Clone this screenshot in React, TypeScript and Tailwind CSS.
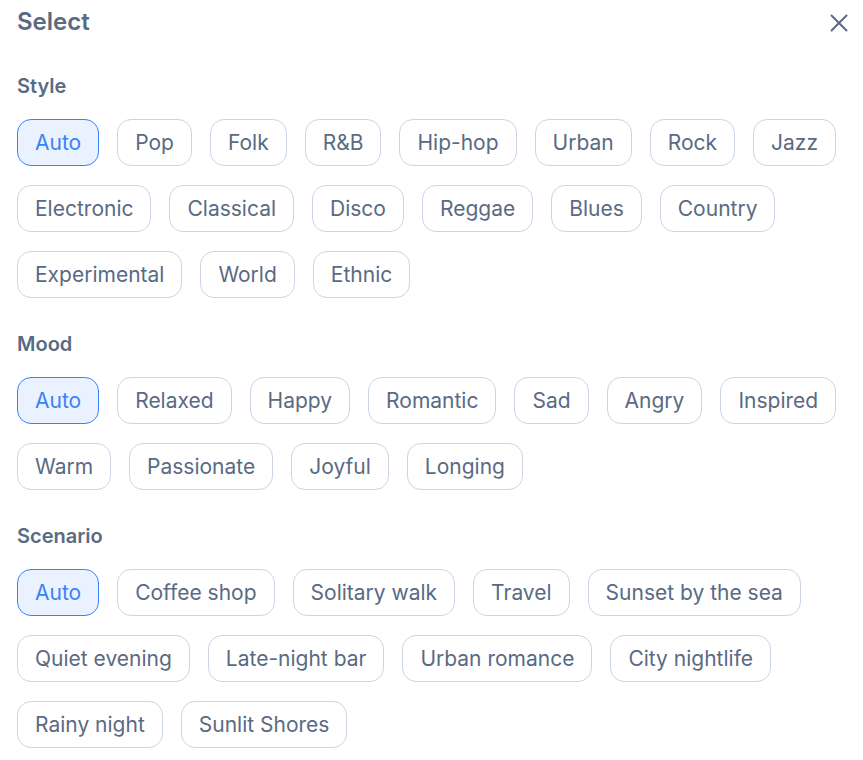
const groups = [
  {
    title: 'Style',
    options: [
      'Auto', 'Pop', 'Folk', 'R&B', 'Hip-hop', 'Urban', 'Rock', 'Jazz',
      'Electronic', 'Classical', 'Disco', 'Reggae', 'Blues', 'Country',
      'Experimental', 'World', 'Ethnic',
    ],
  },
  {
    title: 'Mood',
    options: [
      'Auto', 'Relaxed', 'Happy', 'Romantic', 'Sad', 'Angry', 'Inspired',
      'Warm', 'Passionate', 'Joyful', 'Longing',
    ],
  },
  {
    title: 'Scenario',
    options: [
      'Auto', 'Coffee shop', 'Solitary walk', 'Travel', 'Sunset by the sea',
      'Quiet evening', 'Late-night bar', 'Urban romance', 'City nightlife',
      'Rainy night', 'Sunlit Shores',
    ],
  },
];

function Chip({ label, active }: { label: string; active: boolean }) {
  return (
    <button
      className={
        active
          ? 'flex h-[47px] items-center rounded-[14px] border border-[#3b82f6] bg-[#eaf2ff] px-[17px] pt-[1px] text-[21px] text-[#3b82f6]'
          : 'flex h-[47px] items-center rounded-[14px] border border-[#c9d5e3] bg-white px-[17px] pt-[1px] text-[21px] text-[#5a6a83]'
      }
    >
      {label}
    </button>
  );
}

export default function App() {
  return (
    <div className="min-h-screen bg-white px-[17px] font-['Inter',sans-serif]">
      <div className="flex items-center justify-between pt-[6px]">
        <h2 className="text-[24px] font-semibold leading-8 text-[#5a6a83]">Select</h2>
        <svg
          className="mr-[-2px] mt-[2px] text-[#5a6a83]"
          width="18"
          height="18"
          viewBox="0 0 18 18"
          fill="none"
          stroke="currentColor"
          strokeWidth="2"
          strokeLinecap="round"
        >
          <path d="M1.5 1.5 16.5 16.5M16.5 1.5 1.5 16.5" />
        </svg>
      </div>

      <div className="mt-[34px] flex flex-col gap-[32px]">
        {groups.map((group) => (
          <section key={group.title}>
            <h3 className="mb-[19px] text-[20px] font-semibold leading-7 text-[#5a6a83]">
              {group.title}
            </h3>
            <div className="flex flex-wrap gap-x-[18px] gap-y-[19px]">
              {group.options.map((option, index) => (
                <Chip key={option} label={option} active={index === 0} />
              ))}
            </div>
          </section>
        ))}
      </div>
    </div>
  );
}
